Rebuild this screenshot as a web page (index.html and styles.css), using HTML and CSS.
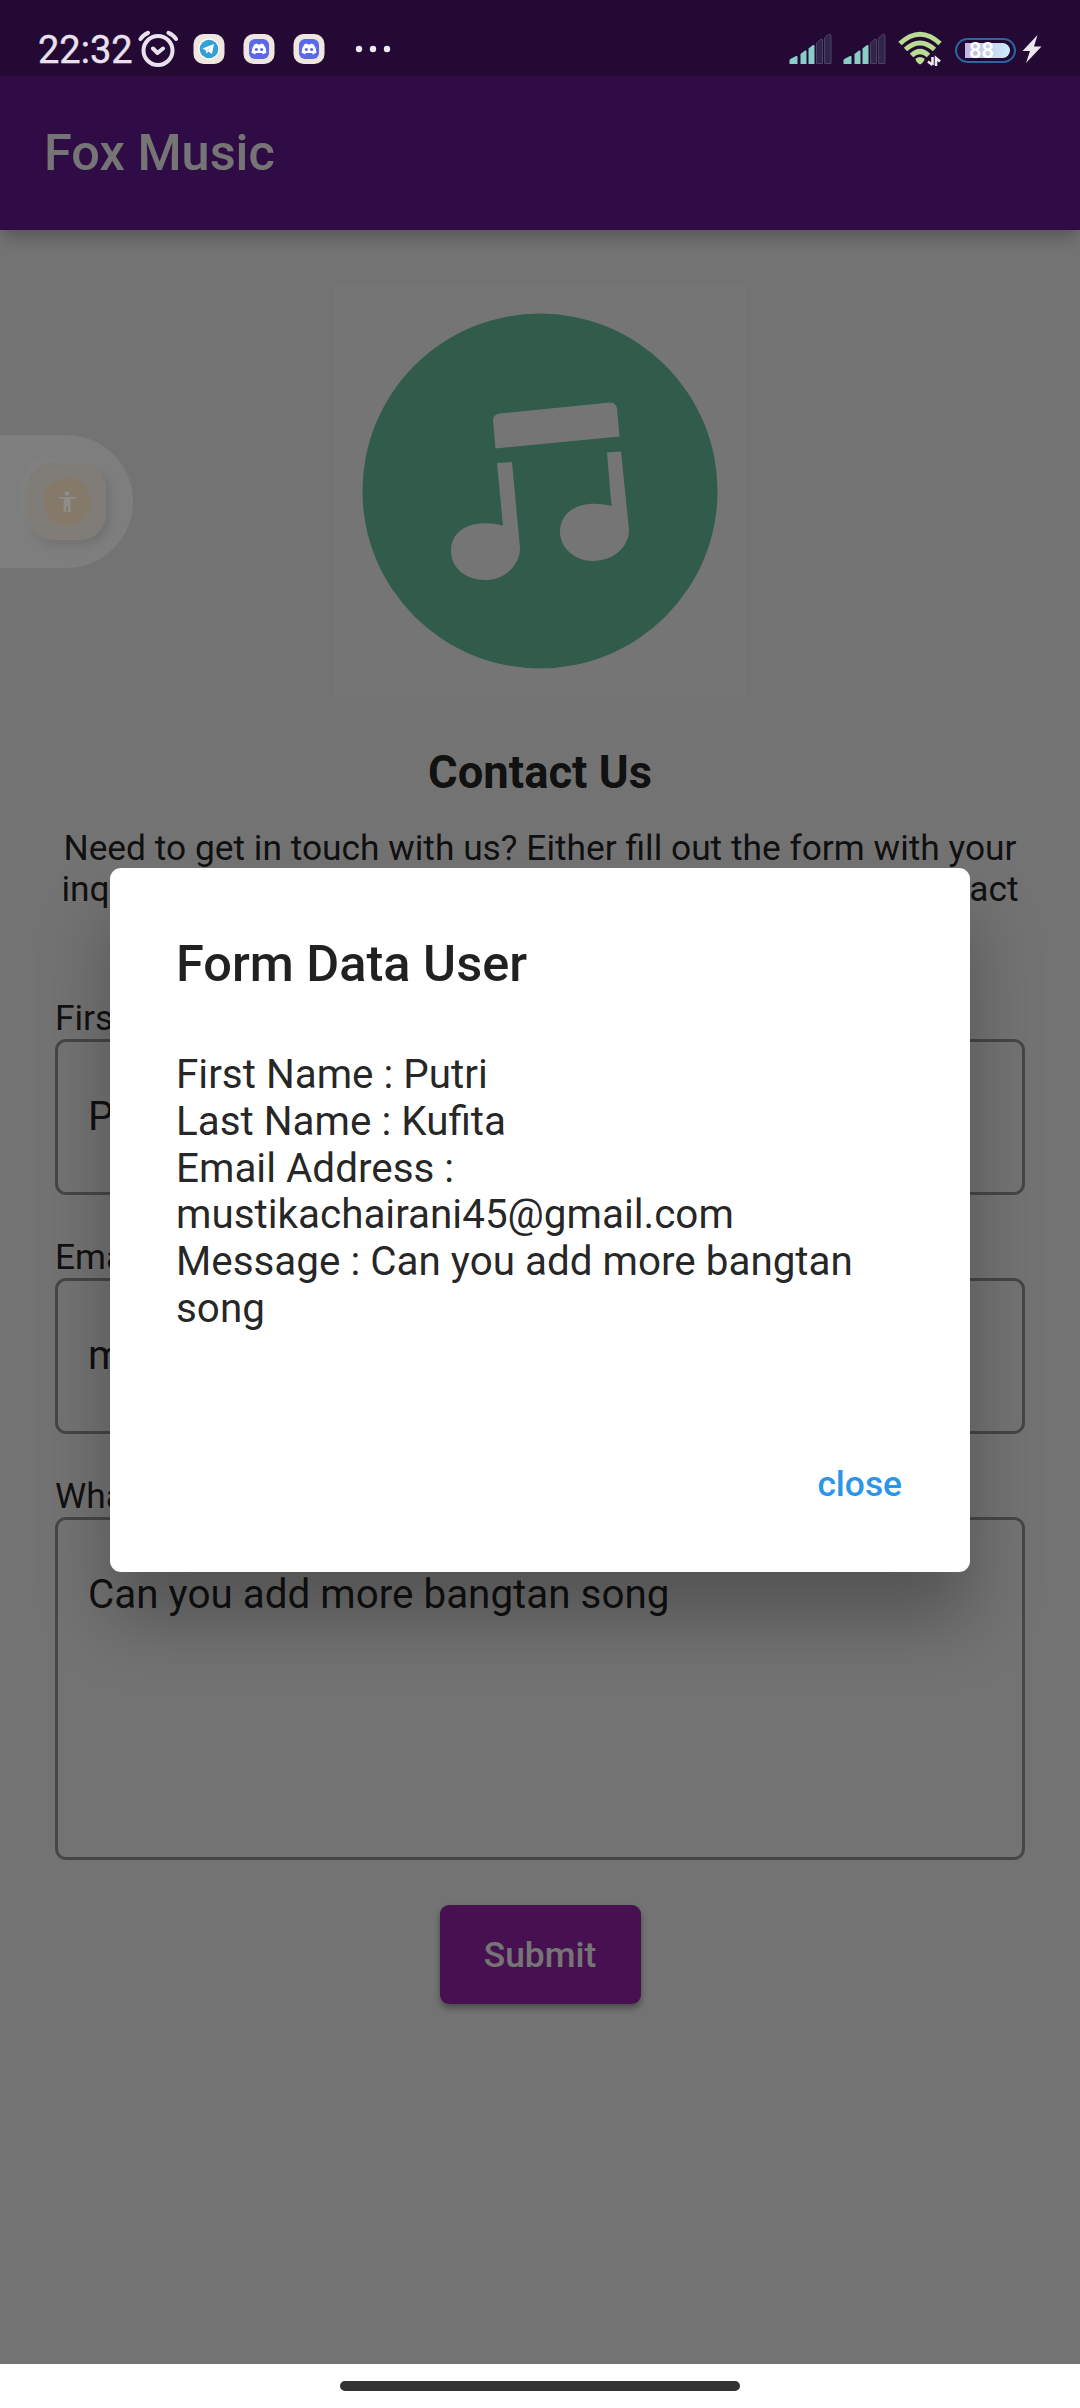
FILE: index.html
```html
<!DOCTYPE html>
<html lang="en">
<head>
<meta charset="utf-8">
<title>Fox Music</title>
<link rel="stylesheet" href="styles.css">
</head>
<body>
<div class="screen">
  <div class="app">
    <header class="app-bar"><h1 class="app-title">Fox Music</h1></header>
    <main class="content">
      <div class="logo">
        <svg width="412" height="412" viewBox="0 0 412 412">
          <circle cx="206" cy="207" r="177.5" fill="#6bc6a4"/>
          <g fill="#fff">
            <path d="M166 129.500L276 118.500Q282 118.500 283 124.500L285.500 152.500L161.500 164.500L159 137Q159 130 166 129.500Z"/>
            <path d="M163 179L178 178L186 264C186 282 170 296 151 296C132 296 117 284 117 267C117 247 136 234 169 241.500Z"/>
            <path d="M273 168.500L287 167.500L295 246C295 263 279 277 259 277C241 277 226 264 226 248C226 228 245 214 277.500 222Z"/>
          </g>
        </svg>
      </div>
      <h2 class="heading">Contact Us</h2>
      <p class="intro">Need to get in touch with us? Either fill out the form with your <span class="intro-line">inquiry or find the department email you'd like to contact</span></p>
      <form class="form">
        <label class="label">First Name</label>
        <div class="field">Putri</div>
        <label class="label">Email</label>
        <div class="field">mustikachairani45@gmail.com</div>
        <label class="label">What can we help you with?</label>
        <div class="field field-area">Can you add more bangtan song</div>
        <button class="submit" type="button">Submit</button>
      </form>
    </main>
  </div>
  <nav class="nav-bar"><span class="handle"></span></nav>

  <div class="scrim">
    <section class="dialog">
      <h2 class="dialog-title">Form Data User</h2>
      <p class="dialog-text">First Name : Putri<br>Last Name : Kufita<br>Email Address :<br>mustikachairani45@gmail.com<br>Message : Can you add more bangtan<br>song</p>
      <div class="dialog-actions"><span class="close">close</span></div>
    </section>
  </div>

  <div class="status-bar">
    <span class="time">22:32</span>
    <svg class="alarm" width="40" height="38" viewBox="0 0 40 38" fill="none" stroke="#e9e2ee" stroke-width="4" stroke-linecap="round" stroke-linejoin="round">
      <circle cx="20" cy="20.500" r="14.500"/>
      <path d="M15 18.500L19.500 23L25 18.500M2.500 9Q5 5 10 2.800M30.500 2.800Q35.500 5 38 9" />
    </svg>
    <svg class="tile telegram" width="34" height="34" viewBox="0 0 34 34">
      <rect x="1.500" y="2" width="31" height="30" rx="10" fill="#efe6df"/>
      <circle cx="17" cy="17" r="10.500" fill="#fff"/>
      <circle cx="17" cy="17" r="9.300" fill="#33a0d9"/>
      <path d="M10.500 16.500L22 12L20 22L16.500 19.500L14.500 21.500L14 18.500Z" fill="#fff"/>
      <path d="M14 18.500L19.500 14.500L16 18.800Z" fill="#b5dcf1"/>
    </svg>
    <svg class="tile" width="34" height="34" viewBox="0 0 34 34">
      <rect x="1.500" y="2" width="31" height="30" rx="10" fill="#efe6df"/>
      <rect x="7" y="7" width="20" height="20" rx="6" fill="#5b68ec"/>
      <path d="M12.500 12.200L15 11.500L15.700 12.500H18.300L19 11.500L21.500 12.200Q24.500 16 24.500 20.500L21 22.400L20 21H14L13 22.400L9.500 20.500Q9.500 16 12.500 12.200Z" fill="#fff"/>
      <circle cx="14.400" cy="17.500" r="1.600" fill="#5b68ec"/><circle cx="19.600" cy="17.500" r="1.600" fill="#5b68ec"/>
    </svg>
    <svg class="tile" width="34" height="34" viewBox="0 0 34 34">
      <rect x="1.500" y="2" width="31" height="30" rx="10" fill="#efe6df"/>
      <rect x="7" y="7" width="20" height="20" rx="6" fill="#5b68ec"/>
      <path d="M12.500 12.200L15 11.500L15.700 12.500H18.300L19 11.500L21.500 12.200Q24.500 16 24.500 20.500L21 22.400L20 21H14L13 22.400L9.500 20.500Q9.500 16 12.500 12.200Z" fill="#fff"/>
      <circle cx="14.400" cy="17.500" r="1.600" fill="#5b68ec"/><circle cx="19.600" cy="17.500" r="1.600" fill="#5b68ec"/>
    </svg>
    <svg class="dots" width="36" height="8" viewBox="0 0 36 8" fill="#efe9f2"><circle cx="4" cy="4" r="3.200"/><circle cx="18" cy="4" r="3.200"/><circle cx="32" cy="4" r="3.200"/></svg>
    <span class="spacer"></span>
    <svg class="signal" width="44" height="32" viewBox="0 0 44 32">
      <g fill="#8acdc7"><path d="M1.500 27Q1.500 26 8 23Q9.500 22.500 9.500 24V31H1.500Z"/><path d="M12.500 21L17 17.500Q18.500 17 18.500 18.500V31H12.500Z"/><path d="M20.500 15.500L25 12Q26.500 11.500 26.500 13V31H20.500Z"/></g>
      <g fill="#31264a" stroke="#4a4264"><path d="M28.500 10L33 6Q34.500 5.500 34.500 7V30.500H28.500Z"/><path d="M36.500 5L40.500 1.500Q43 .500 43 3V30.500H36.500Z"/></g>
    </svg>
    <svg class="signal signal-2" width="44" height="32" viewBox="0 0 44 32">
      <g fill="#8acdc7"><path d="M1.500 27Q1.500 26 8 23Q9.500 22.500 9.500 24V31H1.500Z"/><path d="M12.500 21L17 17.500Q18.500 17 18.500 18.500V31H12.500Z"/><path d="M20.500 15.500L25 12Q26.500 11.500 26.500 13V31H20.500Z"/></g>
      <g fill="#31264a" stroke="#4a4264"><path d="M28.500 10L33 6Q34.500 5.500 34.500 7V30.500H28.500Z"/><path d="M36.500 5L40.500 1.500Q43 .500 43 3V30.500H36.500Z"/></g>
    </svg>
    <svg class="wifi" width="44" height="36" viewBox="0 0 44 36">
      <g fill="none" stroke="#b7dc92" stroke-width="5"><path d="M2 12.500Q22-6 42 12.500"/><path d="M7.500 18.500Q22 5.500 36.500 18.500"/><path d="M13.500 24.500Q22 16.500 30.500 24.500"/></g>
      <path d="M17.500 27.500Q22 24.500 26.500 27.500Q26.500 31 22 33.500Q17.500 31 17.500 27.500Z" fill="#b7dc92"/>
      <path d="M34.500 26V34M30 30.500L34.500 34M38 35V27L42 30.500" fill="none" stroke="#efe9f2" stroke-width="2.600"/>
    </svg>
    <div class="battery"><div class="charge">88</div></div>
    <svg class="bolt" width="20" height="30" viewBox="0 0 20 30"><path d="M15.500 1L.500 17H8L4 29L19.500 12.500H12Z" fill="#ebe5ef"/></svg>
  </div>

  <div class="float-tab">
    <div class="float-tile">
      <svg width="48" height="48" viewBox="0 0 48 48"><circle cx="24" cy="24" r="24" fill="#85796a"/><circle cx="24" cy="15.500" r="2.300" fill="#8e8d8b"/><path d="M15.500 19H33V20.500H27.500V34H25V28H23V34H20.700V20.500H15.500Z" fill="#8e8d8b"/></svg>
    </div>
  </div>
</div>
</body>
</html>
```
FILE: styles.css
```css
* { box-sizing: border-box; }
body { margin: 0; font-family: Roboto, "Liberation Sans", sans-serif; color: rgba(0, 0, 0, 0.87); }
h1, h2, p { margin: 0; font-weight: 500; }

.screen { position: relative; width: 1080px; height: 2408px; overflow: hidden; background: #fff; }
.app { height: 2364px; background: #fafafa; overflow: hidden; }

.app-bar { display: flex; align-items: flex-end; height: 230px; padding: 0 44px 48px; background: #6a1b9a; box-shadow: 0 9px 16px -3px rgba(0, 0, 0, 0.27); }
.app-title { color: #fff; font-size: 50.5px; line-height: 58px; }

.content { display: flex; flex-direction: column; align-items: center; padding: 54px 55px 0; }
.logo { width: 412px; height: 413px; background: #fff; }
.logo svg { display: block; }
.heading { margin-top: 49px; font-size: 45.4px; line-height: 54px; font-weight: 700; }
.intro { height: 123px; margin-top: 28px; font-size: 35.35px; line-height: 41px; text-align: center; font-weight: 400; white-space: nowrap; }
.intro-line { display: block; width: 957px; margin: 0 auto; text-align-last: justify; white-space: normal; }

.form { display: flex; flex-direction: column; width: 970px; margin-top: 47px; }
.label { font-size: 35.35px; line-height: 41px; }
.field { display: flex; align-items: center; height: 156px; margin-bottom: 42px; padding: 0 30px; border: 3px solid #999; border-radius: 11px; font-size: 40.4px; line-height: 46px; }
.field-area { align-items: flex-start; height: 343px; margin-bottom: 45px; padding-top: 52px; }
.submit { align-self: center; width: 201px; height: 99px; padding: 2px 0 0; border: 0; border-radius: 9px; background: #9c27b0; color: #fff; font: 500 35.35px/41px Roboto, sans-serif; box-shadow: 0 4px 6px rgba(0, 0, 0, 0.35); }

.nav-bar { display: flex; justify-content: center; height: 44px; padding-top: 17px; background: #fff; }
.handle { width: 400px; height: 10px; border-radius: 5px; background: #333; }

/* Modal layer over the page */
.scrim { position: absolute; inset: 0 0 44px; display: flex; flex-direction: column; align-items: center; padding-top: 868px; background: rgba(0, 0, 0, 0.54); }
.dialog { width: 860px; height: 704px; padding: 67px 66px 66px; border-radius: 11px; background: #fff; box-shadow: 0 48px 70px rgba(0, 0, 0, 0.27); }
.dialog-title { font-size: 50.5px; line-height: 58px; }
.dialog-text { margin-top: 59px; font-size: 40.4px; line-height: 46.8px; font-weight: 400; white-space: nowrap; }
.dialog-actions { display: flex; justify-content: flex-end; margin-top: 131px; padding-right: 2px; }
.close { color: #2b95e9; font-size: 35.35px; line-height: 41px; font-weight: 500; }

/* System status bar over the app bar */
.status-bar { position: absolute; inset: 0 0 auto; display: flex; align-items: center; height: 76px; padding: 22px 38px 0 38px; background: rgba(0, 0, 0, 0.25); }
.status-bar svg { flex: none; display: block; }
.time { width: 100px; padding-top: 1px; color: #e9e2ee; font-size: 38px; line-height: 44px; -webkit-text-stroke: 0.4px #e9e2ee; }
.tile { margin-left: 16px; }
.telegram { margin-left: 14px; }
.dots { margin-left: 29px; }
.spacer { flex: 1; }
.signal-2 { margin-left: 10px; }
.wifi { margin-left: 12px; }
.battery { width: 61px; height: 25px; margin: 3px 0 0 13px; padding: 3px 4px 3px 8px; border: 2.5px solid #2c659f; border-radius: 13px; }
.charge { height: 15px; padding-left: 4px; border-radius: 0 8px 8px 0; background: linear-gradient(90deg, #c3b5e4, #ccecfb); color: #fff; font-size: 22px; line-height: 16px; font-weight: 500; }
.bolt { margin-left: 6px; }

/* Floating accessibility shortcut docked to the edge */
.float-tab { position: absolute; left: 0; top: 435px; display: flex; align-items: center; justify-content: flex-end; width: 133px; height: 133px; padding-right: 27px; border-radius: 0 67px 67px 0; background: #7e7e7e; }
.float-tile { display: flex; align-items: center; justify-content: center; width: 79px; height: 77px; border-radius: 26px; background: #807d79; box-shadow: 4px 5px 10px rgba(0, 0, 0, 0.1), -4px -5px 10px rgba(255, 255, 255, 0.03); }
```
